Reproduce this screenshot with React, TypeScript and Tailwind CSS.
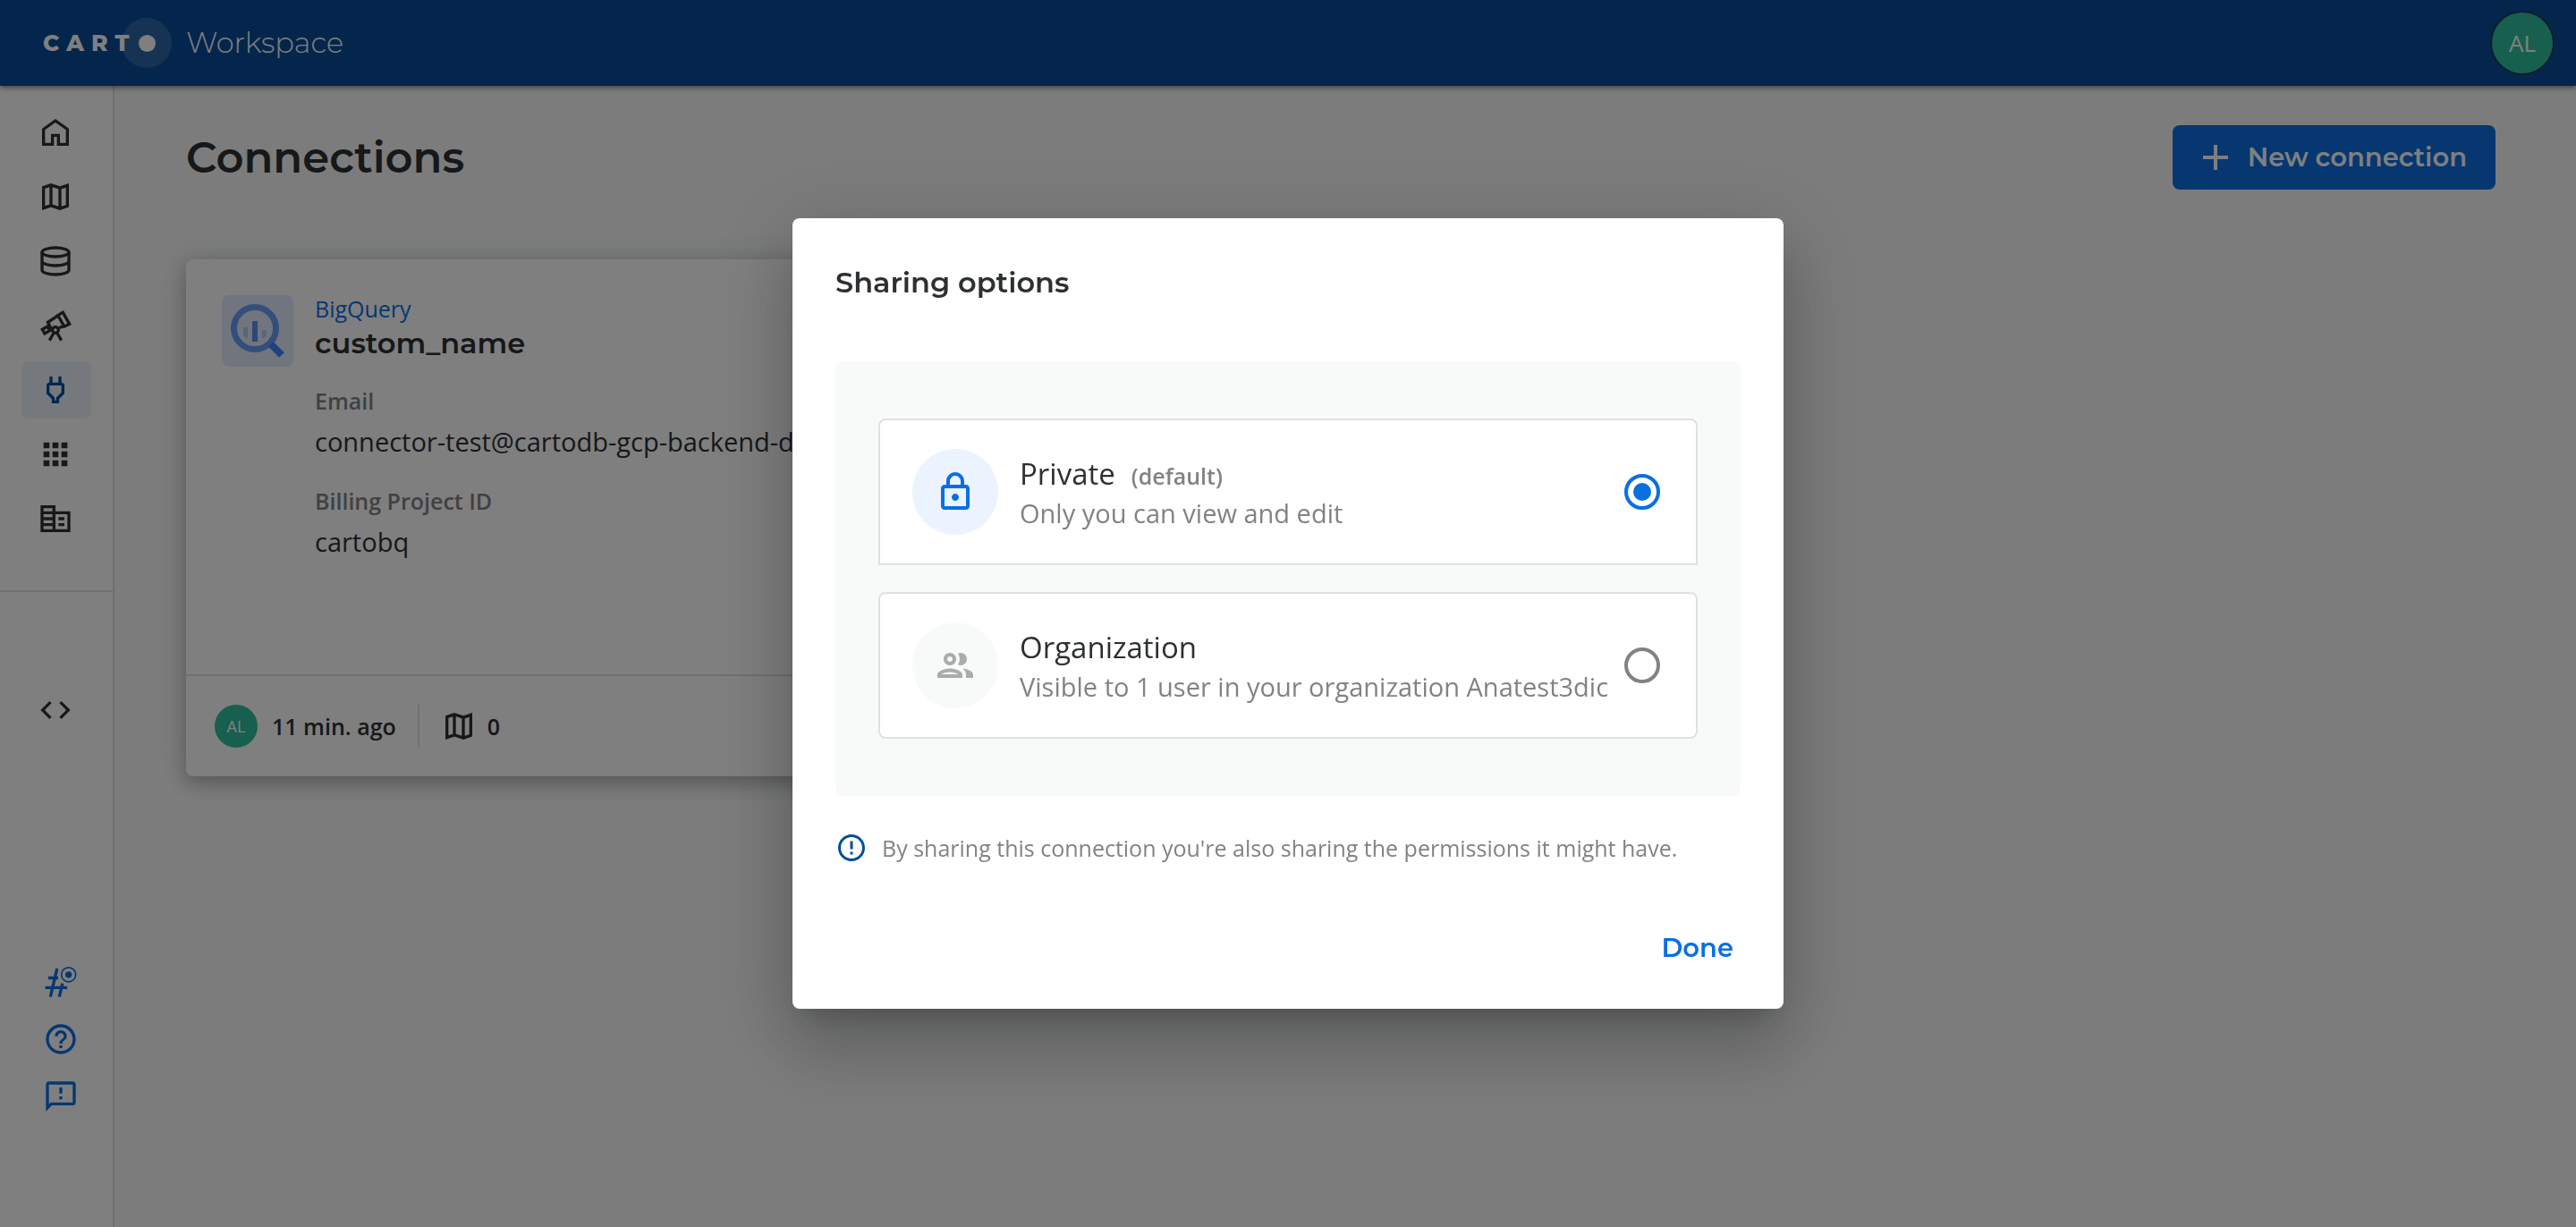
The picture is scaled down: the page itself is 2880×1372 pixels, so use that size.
import { useState, type ReactNode } from "react";
import {
  MdAdd,
  MdApps,
  MdCode,
  MdCorporateFare,
  MdErrorOutline,
  MdHelpOutline,
  MdOutlineFeedback,
  MdOutlineLock,
  MdOutlinePower,
} from "react-icons/md";

type IconProps = { className?: string };

function StrokeIcon({ className, children }: IconProps & { children: ReactNode }) {
  return (
    <svg viewBox="0 0 24 24" fill="none" stroke="currentColor" strokeWidth="2" className={className} aria-hidden="true">
      {children}
    </svg>
  );
}

function HomeIcon({ className }: IconProps) {
  return (
    <StrokeIcon className={className}>
      <path d="M4 20V9.9l8-5.7 8 5.7V20h-6v-6h-4v6z" />
    </StrokeIcon>
  );
}

function MapIcon({ className }: IconProps) {
  return (
    <StrokeIcon className={className}>
      <path d="M4 5.8 9 4.1l6 2 5-1.7v13.8l-5 1.7-6-2-5 1.7zM9 4v14M15 6v14" />
    </StrokeIcon>
  );
}

function DatabaseIcon({ className }: IconProps) {
  return (
    <StrokeIcon className={className}>
      <ellipse cx="12" cy="6" rx="9" ry="3" />
      <path d="M3 6v12c0 1.66 4 3 9 3s9-1.34 9-3V6M3 12c0 1.66 4 3 9 3s9-1.34 9-3" />
    </StrokeIcon>
  );
}

function TelescopeIcon({ className }: IconProps) {
  return (
    <StrokeIcon className={className}>
      <path d="M13.6 5.2 17 3.2l4.4 7.8-3.5 1.7zM13.6 5.4 6.9 9.8l2.2 4.4M14.4 13.5l3.5-1.1M6.6 12.6l-3.4 2 1.6 2.8 3.4-2z" />
      <circle cx="12" cy="15" r="2" />
      <path d="M11 16.8 8 22M13 16.8 16 22" />
    </StrokeIcon>
  );
}

function ChannelIcon({ className }: IconProps) {
  return (
    <StrokeIcon className={className}>
      <path d="M9.5 3 5 22M13.1 13 11 22M3.6 9.3h6.6M1.5 15.8h14.8" />
      <circle cx="17.2" cy="7.1" r="4.8" strokeWidth="1" />
      <circle cx="17.2" cy="7.1" r="2.2" fill="currentColor" stroke="none" />
    </StrokeIcon>
  );
}

function GroupIcon({ className }: IconProps) {
  return (
    <svg viewBox="0 0 24 24" fill="currentColor" className={className} aria-hidden="true">
      <path d="M9 13.75c-2.34 0-7 1.17-7 3.5V19h14v-1.75c0-2.33-4.66-3.5-7-3.5zM4.34 17c.84-.58 2.87-1.25 4.66-1.25s3.82.67 4.66 1.25H4.34zM9 12c1.93 0 3.5-1.57 3.5-3.5S10.93 5 9 5 5.5 6.57 5.5 8.5 7.07 12 9 12zm0-5c.83 0 1.5.67 1.5 1.5S9.83 10 9 10s-1.5-.67-1.5-1.5S8.17 7 9 7zm7.04 6.81c1.16.84 1.96 1.96 1.96 3.44V19h4v-1.75c0-2.02-3.5-3.17-5.96-3.44zM15 12c1.93 0 3.5-1.57 3.5-3.5S16.93 5 15 5c-.54 0-1.04.13-1.5.35.63.89 1 1.98 1 3.15s-.37 2.26-1 3.15c.46.22.96.35 1.5.35z" />
    </svg>
  );
}

function BigQueryIcon({ className }: IconProps) {
  return (
    <svg viewBox="0 0 80 80" fill="none" className={className} aria-hidden="true">
      <path d="M24 36h5v13c-2-1-4-3-5-5z" fill="#aecbfa" />
      <path d="M34 29h6v23h-6z" fill="#5a8ff2" />
      <path d="M45 39h5v5c-1 2-3 4-5 5z" fill="#aecbfa" />
      <circle cx="37" cy="37" r="23.5" stroke="#669df6" strokeWidth="7" />
      <path d="m55 55 12 12" stroke="#3f83f8" strokeWidth="8" />
    </svg>
  );
}

function Logo() {
  return (
    <a href="#home" aria-label="CARTO Workspace" className="flex items-center text-white">
      <span className="flex gap-2 text-[25px] leading-8 font-extrabold">
        <span>C</span>
        <span>A</span>
        <span>R</span>
        <span>T</span>
      </span>
      <span className="-ml-2 flex size-14 items-center justify-center rounded-full bg-white/15">
        <span className="size-[19px] rounded-full bg-white" />
      </span>
      <span className="ml-4 text-[32px] leading-10 font-light">Workspace</span>
    </a>
  );
}

const mainNav = [
  { label: "Home", Icon: HomeIcon },
  { label: "Maps", Icon: MapIcon },
  { label: "Data Explorer", Icon: DatabaseIcon },
  { label: "Data Observatory", Icon: TelescopeIcon },
  { label: "Connections", Icon: MdOutlinePower, active: true },
  { label: "Applications", Icon: MdApps },
  { label: "Organization", Icon: MdCorporateFare },
];

const helpNav = [
  { label: "Community", Icon: ChannelIcon },
  { label: "Help", Icon: MdHelpOutline },
  { label: "Feedback", Icon: MdOutlineFeedback },
];

function Sidebar() {
  return (
    <aside className="flex w-32 shrink-0 flex-col border-r-2 border-[#dfe0e0] bg-white">
      <nav aria-label="Main" className="flex flex-col gap-2 px-6 pt-5 pb-12">
        {mainNav.map(({ label, Icon, active }) => (
          <a
            key={label}
            href="#nav"
            aria-label={label}
            aria-current={active ? "page" : undefined}
            className={
              active
                ? "flex h-16 items-center rounded-lg bg-[#ebf2fd] pl-[18px] text-[#024d9e]"
                : "flex h-16 items-center rounded-lg pl-[18px] text-[#2c3032]"
            }
          >
            <Icon className="size-10" />
          </a>
        ))}
      </nav>
      <nav aria-label="Developers" className="border-t-2 border-[#dfe0e0] px-6 pt-[100px]">
        <a href="#developers" aria-label="Developers" className="flex h-16 items-center pl-[18px] text-[#2c3032]">
          <MdCode className="size-10" />
        </a>
      </nav>
      <nav aria-label="Support" className="mt-auto flex flex-col gap-6 pb-[126px] pl-12 text-[#0a6fe2]">
        {helpNav.map(({ label, Icon }) => (
          <a key={label} href="#support" aria-label={label} className="size-10">
            <Icon className="size-10" />
          </a>
        ))}
      </nav>
    </aside>
  );
}

function ConnectionCard() {
  return (
    <article className="flex h-[578px] flex-col rounded-lg bg-white shadow-[0_8px_20px_rgba(44,48,50,0.28),0_2px_36px_rgba(44,48,50,0.14)]">
      <div className="flex flex-1 gap-6 p-10">
        <div className="size-20 shrink-0 rounded-lg bg-[#e1eafc]">
          <BigQueryIcon className="size-20" />
        </div>
        <div className="min-w-0">
          <p className="text-[25px] leading-[30px] text-[#0a6fe2]">BigQuery</p>
          <h2 className="font-['Montserrat','Inter',sans-serif] text-[32px] leading-12 font-semibold">custom_name</h2>
          <dl className="mt-6">
            <dt className="text-[25px] leading-8 font-semibold text-[#808384]">Email</dt>
            <dd className="mt-2.5 text-[29px] leading-10 whitespace-nowrap">
              connector-test@cartodb-gcp-backend-data.iam
            </dd>
            <dt className="mt-[30px] text-[25px] leading-8 font-semibold text-[#808384]">Billing Project ID</dt>
            <dd className="mt-2.5 text-[29px] leading-10">cartobq</dd>
          </dl>
        </div>
      </div>
      <footer className="flex h-[114px] items-center border-t-2 border-[#dfe0e0] pl-8 text-[25px] leading-8 font-semibold">
        <span className="flex size-12 items-center justify-center rounded-full bg-[#2fbf9d] text-[18px] leading-6 font-normal text-white">
          AL
        </span>
        <span className="ml-4">11 min. ago</span>
        <span className="mx-6 h-12 w-0.5 bg-[#dfe0e0]" />
        <MapIcon className="size-10" />
        <span className="ml-3">0</span>
      </footer>
    </article>
  );
}

type OptionProps = {
  name: string;
  note?: string;
  description: string;
  checked: boolean;
  onSelect: () => void;
  icon: ReactNode;
  first?: boolean;
};

function SharingOption({ name, note, description, checked, onSelect, icon, first }: OptionProps) {
  return (
    <label
      className={
        first
          ? "flex h-[164px] cursor-pointer items-center rounded-t-lg border-2 border-[#dfe0e0] bg-white px-9"
          : "flex h-[164px] cursor-pointer items-center rounded-lg border-2 border-[#dfe0e0] bg-white px-9"
      }
    >
      {icon}
      <span className="ml-6 flex flex-1 flex-col whitespace-nowrap">
        <span className="flex items-baseline gap-[18px] text-[33px] leading-12">
          {name}
          {note && <span className="text-[25px] leading-8 font-semibold text-[#808384]">{note}</span>}
        </span>
        <span className="text-[29px] leading-10 text-[#808384]">{description}</span>
      </span>
      <input
        type="radio"
        name="sharing"
        checked={checked}
        onChange={onSelect}
        className="mr-1 size-10 shrink-0 appearance-none rounded-full border-4 border-[#808384] bg-clip-content p-1.5 checked:border-[#0a6fe2] checked:bg-[#0a6fe2]"
      />
    </label>
  );
}

function SharingDialog() {
  const [selected, setSelected] = useState("private");
  return (
    <div className="fixed inset-0 z-20 flex items-center justify-center bg-black/50">
      <section
        role="dialog"
        aria-modal="true"
        aria-labelledby="sharing-title"
        className="w-[1108px] max-w-full rounded-lg bg-white px-12 pt-12 pb-8 shadow-[0_22px_30px_-14px_rgba(0,0,0,0.2),0_48px_76px_6px_rgba(0,0,0,0.14),0_18px_92px_16px_rgba(0,0,0,0.12)]"
      >
        <h2
          id="sharing-title"
          className="font-['Montserrat','Inter',sans-serif] text-[32px] leading-12 font-semibold"
        >
          Sharing options
        </h2>
        <div className="mt-16 flex flex-col gap-[30px] rounded-lg bg-[#f8faf9] px-12 py-16">
          <SharingOption
            first
            name="Private"
            note="(default)"
            description="Only you can view and edit"
            checked={selected === "private"}
            onSelect={() => setSelected("private")}
            icon={
              <span className="flex size-24 shrink-0 items-center justify-center rounded-full bg-[#ebf3fe] text-[#0a6fe2]">
                <MdOutlineLock className="size-12" />
              </span>
            }
          />
          <SharingOption
            name="Organization"
            description="Visible to 1 user in your organization Anatest3dic"
            checked={selected === "organization"}
            onSelect={() => setSelected("organization")}
            icon={
              <span className="flex size-24 shrink-0 items-center justify-center rounded-full bg-[#f8faf9] text-[#a9abac]">
                <GroupIcon className="size-12" />
              </span>
            }
          />
        </div>
        <p className="mt-10 flex items-center gap-4 text-[25px] leading-9 text-[#808384]">
          <MdErrorOutline className="size-9 shrink-0 text-[#024d9e]" />
          By sharing this connection you're also sharing the permissions it might have.
        </p>
        <div className="mt-[58px] flex justify-end">
          <button
            type="button"
            className="h-[72px] px-2 font-['Montserrat','Inter',sans-serif] text-[29px] leading-10 font-semibold text-[#0a6fe2]"
          >
            Done
          </button>
        </div>
      </section>
    </div>
  );
}

export default function App() {
  return (
    <div className="flex min-h-screen flex-col bg-[#f8f9f9] font-['Open_Sans',sans-serif] text-[#2c3032]">
      <header className="z-10 flex h-24 items-center justify-between bg-[#094c9b] pr-[26px] pl-12 font-['Montserrat','Inter',sans-serif] shadow-[0_2px_6px_rgba(44,48,50,0.6)]">
        <Logo />
        <button
          type="button"
          aria-label="Account"
          className="flex size-[68px] items-center justify-center rounded-full bg-[#2fbf9d] font-['Open_Sans',sans-serif] text-[26px] leading-8 text-white ring-2 ring-[#2c3032]/60"
        >
          AL
        </button>
      </header>
      <div className="flex flex-1">
        <Sidebar />
        <main className="min-w-0 flex-1 pt-11 pr-[90px] pl-20">
          <div className="flex items-center justify-between">
            <h1 className="font-['Montserrat','Inter',sans-serif] text-[48px] leading-[72px] font-semibold">Connections</h1>
            <button
              type="button"
              className="flex h-[72px] items-center gap-3 rounded-lg bg-[#0d6fe0] pr-8 pl-6 font-['Montserrat','Inter',sans-serif] text-[29px] leading-10 font-semibold text-white"
            >
              <MdAdd className="size-12" />
              New connection
            </button>
          </div>
          <div className="mt-[78px] grid grid-cols-3 gap-12">
            <ConnectionCard />
          </div>
        </main>
      </div>
      <SharingDialog />
    </div>
  );
}
